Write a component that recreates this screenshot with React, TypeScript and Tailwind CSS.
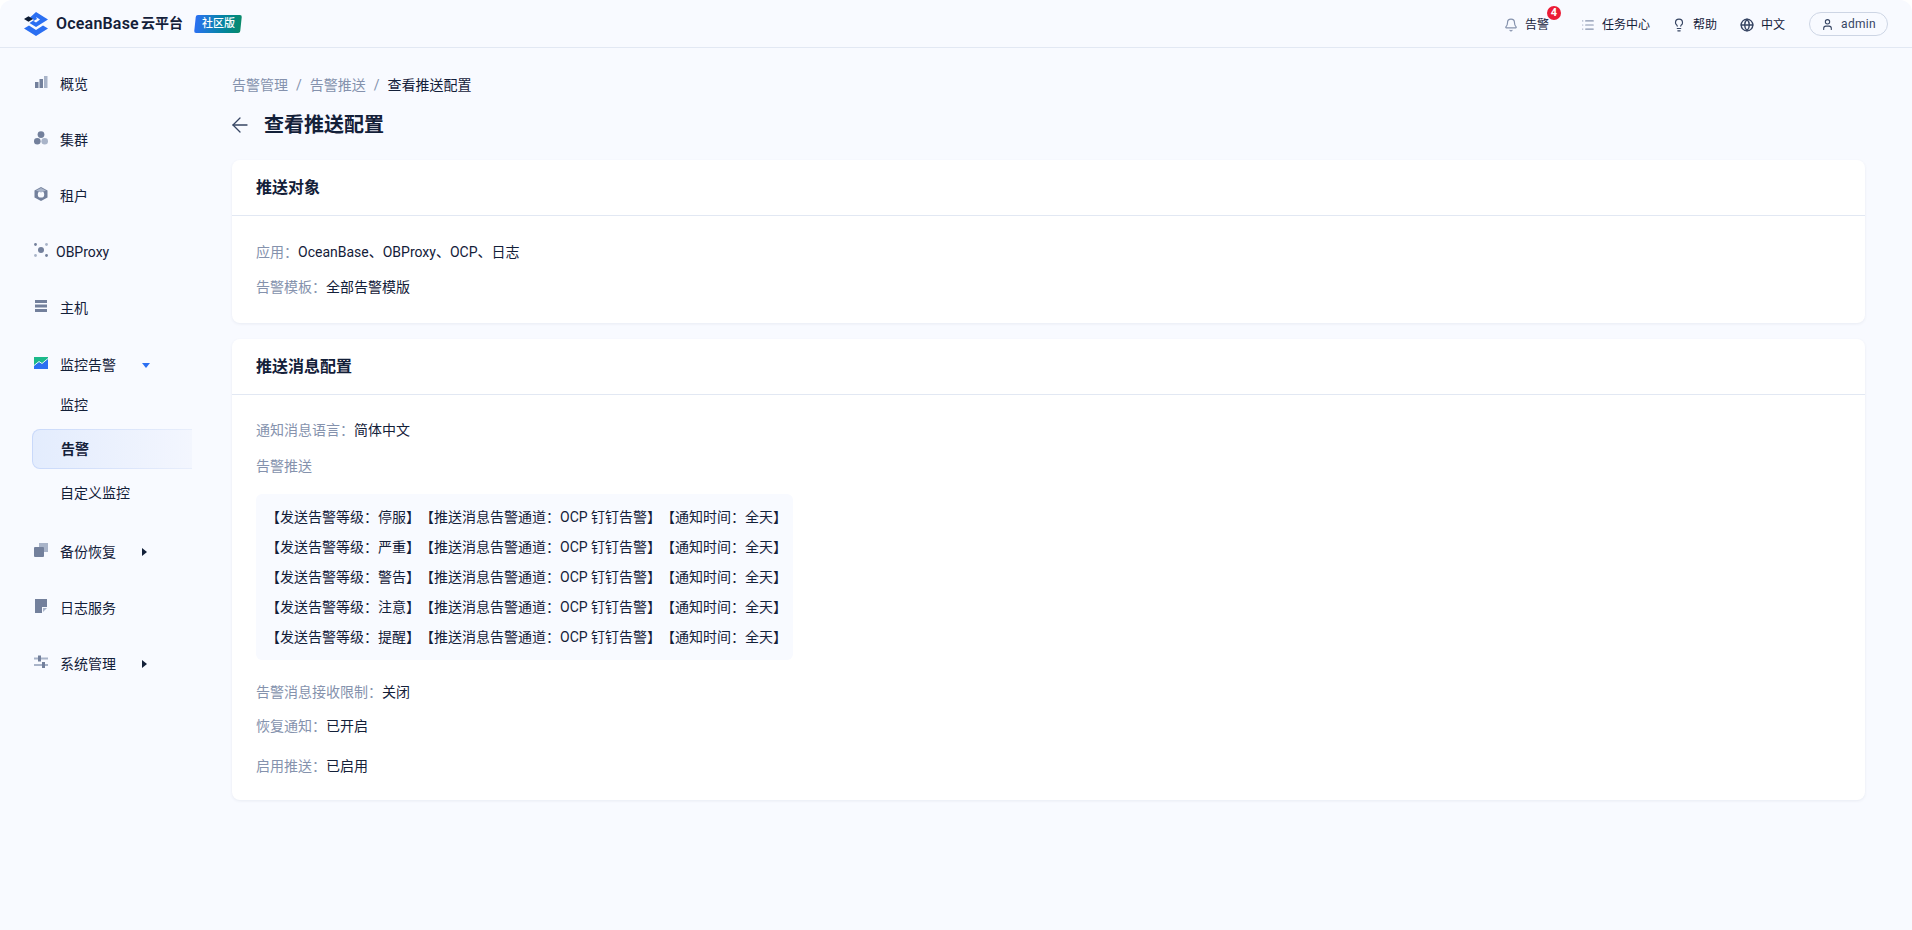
import React from "react";
import { ArrowLeft, Bell, Globe, Lightbulb, List, User } from "lucide-react";

function BarsIcon() {
  return (
    <svg width="14" height="14" viewBox="0 0 14 14" fill="#73809c">
      <rect x="1" y="7" width="3.5" height="6" />
      <rect x="5.5" y="4" width="3.5" height="9" />
      <rect x="10" y="1" width="3.5" height="12" fill="#a9b4c9" />
    </svg>
  );
}

function ClusterIcon() {
  return (
    <svg width="14" height="14" viewBox="0 0 14 14" fill="#73809c">
      <circle cx="7" cy="3.6" r="3.4" />
      <circle cx="3.3" cy="10.2" r="3.3" />
      <circle cx="10.7" cy="10.2" r="3.3" fill="#a9b4c9" />
    </svg>
  );
}

function TenantIcon() {
  return (
    <svg width="14" height="14" viewBox="0 0 14 14">
      <path d="M7 0 13.5 3.5V10.5L7 14 .5 10.5V3.5Z" fill="#73809c" />
      <circle cx="7" cy="7.4" r="3.2" fill="#f8faff" />
      <path d="M2 3.6 7 1 12 3.6 7 5.4Z" fill="#a9b4c9" />
    </svg>
  );
}

function ProxyIcon() {
  return (
    <svg width="14" height="14" viewBox="0 0 14 14" fill="#73809c">
      <circle cx="7" cy="7" r="3" />
      <circle cx="1.5" cy="1.5" r="1.4" />
      <circle cx="12.5" cy="1.5" r="1.4" fill="#a9b4c9" />
      <circle cx="1.5" cy="12.5" r="1.4" fill="#a9b4c9" />
      <circle cx="12.5" cy="12.5" r="1.4" />
    </svg>
  );
}

function HostIcon() {
  return (
    <svg width="14" height="12" viewBox="0 0 14 12" fill="#73809c">
      <rect x="1" y="0" width="12" height="3" />
      <rect x="1" y="4.5" width="12" height="3" />
      <rect x="1" y="9" width="12" height="3" />
    </svg>
  );
}

function MonitorIcon() {
  return (
    <svg width="14" height="14" viewBox="0 0 14 14">
      <rect y="1" width="14" height="12" fill="#1bb98a" />
      <path d="M0 10 5 6 8 8 14 3V13H0Z" fill="#2b6ff2" />
      <path d="M0 9.5 5 5.5 8 7.5 14 2.5" stroke="#e6f0ff" strokeWidth="1" fill="none" />
    </svg>
  );
}

function BackupIcon() {
  return (
    <svg width="14" height="14" viewBox="0 0 14 14">
      <rect x="5" y="0" width="9" height="9" fill="#a9b4c9" />
      <rect x="0" y="4" width="10" height="10" rx="1" fill="#73809c" />
    </svg>
  );
}

function LogIcon() {
  return (
    <svg width="14" height="14" viewBox="0 0 14 14">
      <path d="M1 0H13V8H8V14H1Z" fill="#73809c" />
      <path d="M9 9H13L9 13Z" fill="#a9b4c9" />
    </svg>
  );
}

function SettingsIcon() {
  return (
    <svg width="14" height="14" viewBox="0 0 14 14" fill="#73809c">
      <rect x="0" y="2.5" width="14" height="2" fill="#a9b4c9" />
      <rect x="4" y="0.5" width="3" height="6" />
      <rect x="0" y="9" width="14" height="2" fill="#a9b4c9" />
      <rect x="8" y="7" width="3" height="6" />
    </svg>
  );
}

function Logo() {
  return (
    <svg width="24" height="24" viewBox="0 0 24 24">
      <path d="M12 0 24 7.5 12 15 5.5 11 10 8 6 5.5Z" fill="#2b6ff2" />
      <path d="M0 7 4.5 4.2 9 7 4.5 9.8Z" fill="#0d1b33" />
      <path d="M12 10.5 9.5 9 13 7 12 5 16 7.5Z" fill="#f8faff" />
      <path d="M0 16.5 5 13.5 12 18 19 13.5 24 16.5 12 24Z" fill="#2b6ff2" />
    </svg>
  );
}

function Caret({ open }: { open?: boolean }) {
  if (open) {
    return <span className="w-0 h-0 border-x-[4px] border-x-transparent border-t-[5px] border-t-[#2b6ff2]" />;
  }
  return <span className="w-0 h-0 border-y-[4px] border-y-transparent border-l-[5px] border-l-[#132039]" />;
}

function NavItem({ icon, label, caret, gap }: { icon: React.ReactNode; label: string; caret?: "open" | "closed"; gap?: string }) {
  return (
    <div className="h-10 flex items-center pl-[2px]">
      <div className="w-[14px] h-[14px] flex items-center justify-center -mt-1">{icon}</div>
      <span className={`${gap ?? "ml-[12px]"} text-[#132039]`}>{label}</span>
      {caret && (
        <span className="ml-[26px] flex">
          <Caret open={caret === "open"} />
        </span>
      )}
    </div>
  );
}

function Row({ label, value, className }: { label: string; value: string; className?: string }) {
  return (
    <div className={`leading-[22px] ${className ?? ""}`}>
      <span className="text-[#8592ad]">{label}</span>
      <span className="text-[#132039]">{value}</span>
    </div>
  );
}

function Card({ title, children }: { title: string; children: React.ReactNode }) {
  return (
    <div className="bg-white rounded-[8px] shadow-[0_1px_3px_rgba(54,69,99,0.08)]">
      <div className="h-[56px] pl-6 flex items-center border-b border-[#e2e8f3] text-[16px] font-semibold text-[#132039]">
        {title}
      </div>
      {children}
    </div>
  );
}

const levels = ["停服", "严重", "警告", "注意", "提醒"];

export default function App() {
  return (
    <div className="w-[1912px] h-[930px] bg-white">
      <div className="h-full overflow-hidden rounded-t-[12px] bg-[#f8faff] text-[14px] [text-spacing-trim:space-all] [font-family:Roboto,'Noto_Sans_CJK_SC',sans-serif]">
        <header className="h-[48px] border-b border-[#e2e8f3] flex items-center pl-6 pr-6">
          <Logo />
          <span className="ml-[8px] w-[80px] text-[16px] tracking-[0.2px] font-semibold text-[#132039]">OceanBase</span>
          <span className="ml-[5px] text-[14px] font-semibold text-[#132039]">云平台</span>
          <span className="ml-[12px] h-[18px] w-[46px] flex items-center justify-center -skew-x-6 rounded-[2px] bg-gradient-to-r from-[#2b6ff2] to-[#0a8a6a]">
            <span className="skew-x-6 text-[11px] font-medium text-white">社区版</span>
          </span>
          <div className="ml-auto mt-[2px] flex items-center text-[12px] text-[#132039]">
            <div className="relative flex items-center gap-[7px] mr-[2px]">
              <Bell size={14} color="#8592ad" />
              <span>告警</span>
              <span className="absolute -top-[10px] left-[43px] w-[14px] h-[14px] rounded-full bg-[#eb1c36] text-white text-[11px] font-bold leading-[14px] text-center">
                4
              </span>
            </div>
            <div className="ml-[30px] flex items-center gap-[7px]">
              <List size={14} color="#8592ad" />
              <span>任务中心</span>
            </div>
            <div className="ml-[22px] flex items-center gap-[7px]">
              <Lightbulb size={14} color="#364563" />
              <span>帮助</span>
            </div>
            <div className="ml-[23px] flex items-center gap-[7px]">
              <Globe size={14} color="#364563" strokeWidth={2.4} />
              <span>中文</span>
            </div>
            <div className="ml-[24px] -mt-[1px] h-[24px] w-[79px] rounded-full border border-[#cdd5e4] flex items-center justify-center gap-[7px]">
              <User size={13} color="#364563" />
              <span className="text-[#364563] tracking-[0.3px]">admin</span>
            </div>
          </div>
        </header>
        <div className="flex">
          <aside className="w-[232px] pl-[32px] pt-[16px] shrink-0">
            <div className="flex flex-col gap-4">
              <NavItem icon={<BarsIcon />} label="概览" />
              <NavItem icon={<ClusterIcon />} label="集群" />
              <NavItem icon={<TenantIcon />} label="租户" />
              <NavItem icon={<ProxyIcon />} label="OBProxy" gap="ml-[8px]" />
              <NavItem icon={<HostIcon />} label="主机" />
              <div className="mt-[1px] mb-[3px]">
                <NavItem icon={<MonitorIcon />} label="监控告警" caret="open" />
                <div className="flex flex-col gap-1 w-[160px]">
                  <div className="h-10 flex items-center pl-[28px] text-[#132039]">监控</div>
                  <div className="h-10 flex items-center pl-[28px] font-semibold text-[#132039] rounded-l-[8px] border border-r-0 border-transparent [background:linear-gradient(90deg,#e3ecfd,#f3f6fe)_padding-box,linear-gradient(90deg,#c9d9fa,#e8eefb)_border-box]">
                    告警
                  </div>
                  <div className="h-10 flex items-center pl-[28px] text-[#132039]">自定义监控</div>
                </div>
              </div>
              <NavItem icon={<BackupIcon />} label="备份恢复" caret="closed" />
              <NavItem icon={<LogIcon />} label="日志服务" />
              <NavItem icon={<SettingsIcon />} label="系统管理" caret="closed" />
            </div>
          </aside>
          <main className="flex-1 pr-[47px] pt-[26px]">
            <div className="leading-[22px] text-[#8592ad] flex">
              <span>告警管理</span>
              <span className="mx-[8px]">/</span>
              <span>告警推送</span>
              <span className="mx-[8px]">/</span>
              <span className="text-[#132039]">查看推送配置</span>
            </div>
            <div className="mt-[13px] h-[32px] flex items-center">
              <ArrowLeft size={24} color="#364563" strokeWidth={1.3} className="-ml-[4px]" />
              <span className="ml-[12px] text-[20px] font-semibold text-[#132039]">查看推送配置</span>
            </div>
            <div className="mt-[19px] flex flex-col gap-4">
              <Card title="推送对象">
                <div className="px-6 pt-[25px] pb-[25px] flex flex-col gap-[13px]">
                  <Row label="应用：" value="OceanBase、OBProxy、OCP、日志" />
                  <Row label="告警模板：" value="全部告警模版" />
                </div>
              </Card>
              <Card title="推送消息配置">
                <div className="px-6 pt-[24px] pb-[23px]">
                  <Row label="通知消息语言：" value="简体中文" />
                  <Row label="告警推送" value="" className="mt-[14px]" />
                  <div className="mt-[17px] w-[537px] bg-[#f8faff] rounded-[6px] py-[12px] pl-[10px] flex flex-col gap-[8px] text-[#132039]">
                    {levels.map((level) => (
                      <div key={level} className="leading-[22px] whitespace-nowrap">
                        【发送告警等级：{level}】【推送消息告警通道：OCP 钉钉告警】【通知时间：全天】
                      </div>
                    ))}
                  </div>
                  <Row label="告警消息接收限制：" value="关闭" className="mt-[21px]" />
                  <Row label="恢复通知：" value="已开启" className="mt-[12px]" />
                  <Row label="启用推送：" value="已启用" className="mt-[18px]" />
                </div>
              </Card>
            </div>
          </main>
        </div>
      </div>
    </div>
  );
}
